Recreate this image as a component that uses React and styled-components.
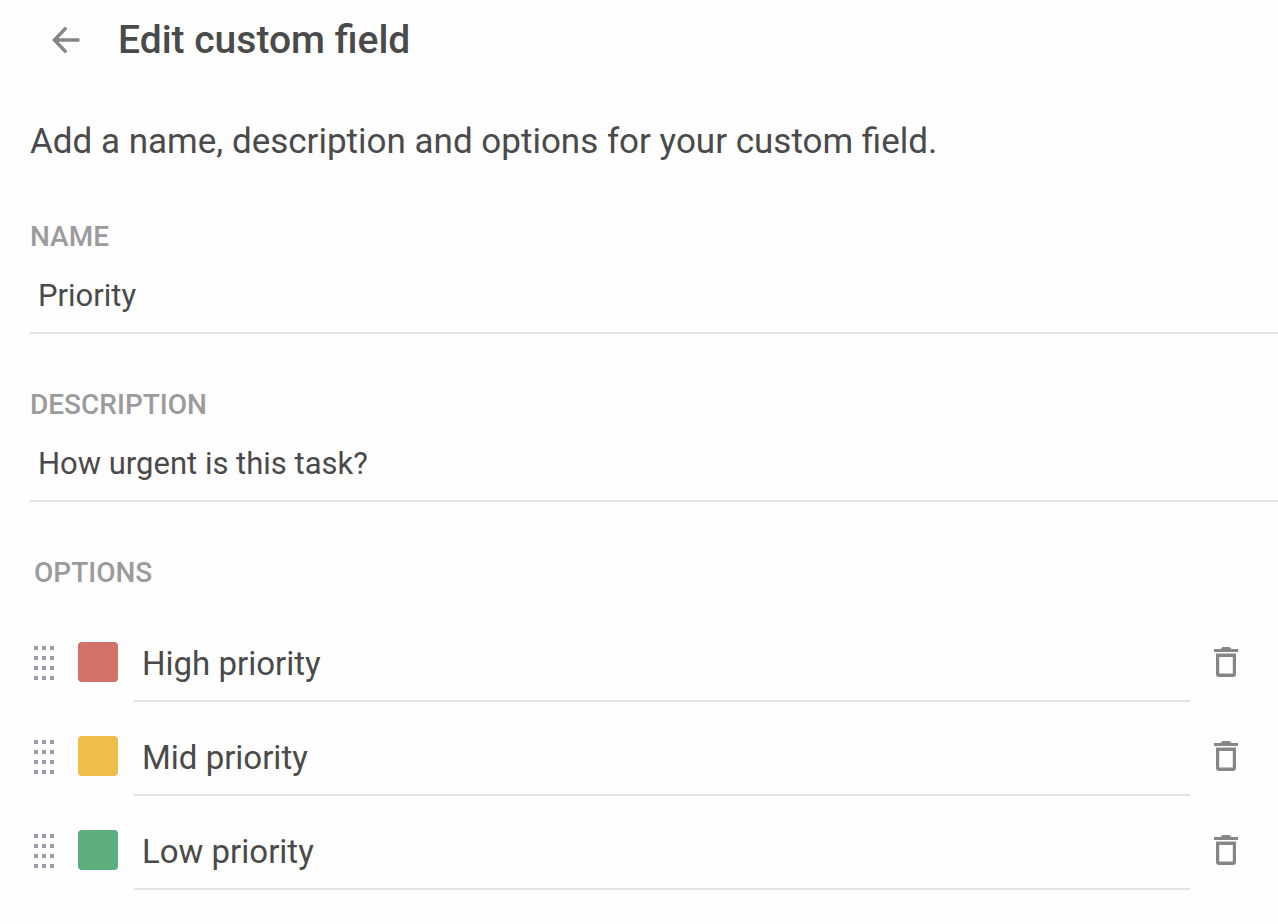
import React, { useCallback, useState } from "react";
import styled, { createGlobalStyle } from "styled-components";

const initialOptions = [
    { id: "high", name: "High priority", color: "#d27167" },
    { id: "mid", name: "Mid priority", color: "#edbe4a" },
    { id: "low", name: "Low priority", color: "#5dae7f" },
]

const ArrowIcon = () => (
    <svg width="28" height="28" viewBox="0 0 28 28" fill="none" stroke="#868686" strokeWidth="3.4" aria-hidden="true">
        <path d="M27.5 14H3M14.2 1.6L2.4 14l11.8 12.4" />
    </svg>
)

const TrashIcon = () => (
    <svg width="24" height="30" viewBox="0 0 24 30" fill="#868686" aria-hidden="true">
        <path d="M0 2h6.5L8.5 0h7l2 2H24v3H0z" />
        <path fillRule="evenodd" d="M2 6.6h20V27a3 3 0 0 1-3 3H5a3 3 0 0 1-3-3zM5.2 10v16.5h13.6V10z" />
    </svg>
)

const HandleIcon = () => (
    <svg width="20" height="34" viewBox="0 0 20 34" fill="#989dab" aria-hidden="true">
        {[0, 10, 20, 30].map(y => [0, 8, 16].map(x => (
            <rect key={`${x}-${y}`} x={x} y={y} width="4" height="4" />
        )))}
    </svg>
)

const Option = ({ option, onChange, onRemove }) => (
    <OptionRow>
        <HandleButton type="button" aria-label={`Move ${option.name}`}>
            <HandleIcon />
        </HandleButton>
        <Swatch type="button" $color={option.color} aria-label={`Color of ${option.name}`} />
        <OptionInput
            aria-label="Option name"
            value={option.name}
            onChange={e => onChange(option.id, e.target.value)}
        />
        <IconButton type="button" aria-label={`Delete ${option.name}`} onClick={() => onRemove(option.id)}>
            <TrashIcon />
        </IconButton>
    </OptionRow>
)

const App = () => {
    const [name, setName] = useState("Priority")
    const [description, setDescription] = useState("How urgent is this task?")
    const [options, setOptions] = useState(initialOptions)

    const renameOption = useCallback((id, value) => {
        setOptions(prev => prev.map(o => o.id === id ? { ...o, name: value } : o))
    }, [])

    const removeOption = useCallback((id) => {
        setOptions(prev => prev.filter(o => o.id !== id))
    }, [])

    return (
        <>
            <GlobalStyle />
            <Page>
                <Header>
                    <IconButton type="button" aria-label="Back">
                        <ArrowIcon />
                    </IconButton>
                    <Title>Edit custom field</Title>
                </Header>
                <Intro>Add a name, description and options for your custom field.</Intro>
                <Field>
                    <Label htmlFor="field-name">NAME</Label>
                    <TextInput id="field-name" value={name} onChange={e => setName(e.target.value)} />
                </Field>
                <Field>
                    <Label htmlFor="field-description">DESCRIPTION</Label>
                    <TextInput
                        id="field-description"
                        value={description}
                        onChange={e => setDescription(e.target.value)}
                    />
                </Field>
                <Options>
                    <GroupLabel>OPTIONS</GroupLabel>
                    <OptionList>
                        {options.map(option => (
                            <Option
                                key={option.id}
                                option={option}
                                onChange={renameOption}
                                onRemove={removeOption}
                            />
                        ))}
                    </OptionList>
                </Options>
            </Page>
        </>
    )
}

const GlobalStyle = createGlobalStyle`
    *, *::before, *::after {
        box-sizing: border-box;
    }

    body {
        margin: 0;
        background: #fefefe;
        color: #4a4a4a;
        font-family: Roboto, "Liberation Sans", sans-serif;
    }

    button, input {
        font-family: inherit;
        color: inherit;
    }
`

const Page = styled.main`
    display: flex;
    flex-direction: column;
    padding-left: 30px;
`

const Header = styled.header`
    display: flex;
    align-items: center;
    gap: 38px;
    height: 80px;
    padding-left: 22px;
`

const Title = styled.h1`
    margin: 0;
    font-size: 39px;
    line-height: 48px;
    font-weight: 500;
`

const Intro = styled.p`
    margin: 42px 0 59px;
    font-size: 35px;
    line-height: 40px;
`

const Field = styled.div`
    display: flex;
    flex-direction: column;
    gap: 7px;
    margin-bottom: 55px;
`

const Label = styled.label`
    font-size: 28px;
    line-height: 32px;
    font-weight: 500;
    color: #9b9b9b;
`

const TextInput = styled.input`
    width: 100%;
    height: 74px;
    padding: 0 8px 2px;
    border: 0;
    border-bottom: 2px solid #e3e3e3;
    border-radius: 0;
    background: transparent;
    font-size: 31px;
    outline: none;
`

const Options = styled.section`
    display: flex;
    flex-direction: column;
    gap: 33px;
    padding: 0 40px 34px 4px;
`

const GroupLabel = styled(Label).attrs({ as: "h2" })`
    margin: 0;
`

const OptionList = styled.ul`
    display: flex;
    flex-direction: column;
    gap: 14px;
    margin: 0;
    padding: 0;
    list-style: none;
`

const OptionRow = styled.li`
    display: flex;
    align-items: center;
`

const IconButton = styled.button`
    display: flex;
    flex: none;
    padding: 0;
    border: 0;
    background: none;
    cursor: pointer;
`

const HandleButton = styled(IconButton)`
    margin-right: 24px;
    padding-top: 2px;
    cursor: grab;
`

const Swatch = styled.button`
    flex: none;
    width: 40px;
    height: 40px;
    margin-right: 16px;
    padding: 0;
    border: 0;
    border-radius: 4px;
    background: ${props => props.$color};
    cursor: pointer;
`

const OptionInput = styled(TextInput)`
    flex: 1;
    min-width: 0;
    height: 80px;
    margin-right: 24px;
    padding: 4px 8px 0;
    font-size: 33px;
`

export default App
